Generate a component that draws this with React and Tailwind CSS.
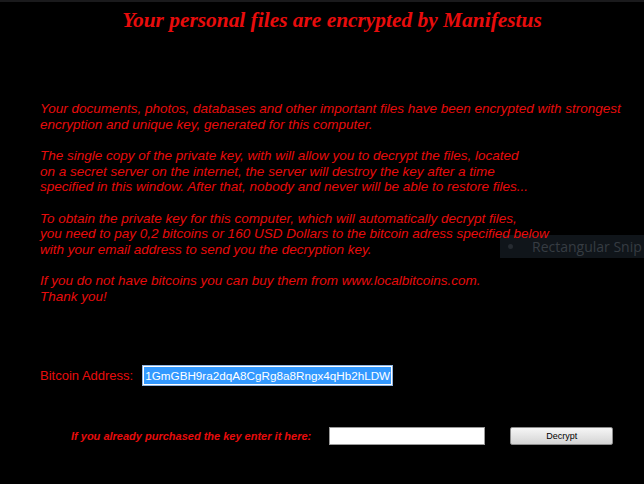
const RED = 'text-[#e80c0c]';

const Paragraph = ({ lines }) => (
  <p className="m-0">
    {lines.map((line, i) => (
      <span key={i} className="block whitespace-nowrap">
        {line}
      </span>
    ))}
  </p>
);

const paragraphs = [
  [
    'Your documents, photos, databases and other important files have been encrypted with strongest',
    'encryption and unique key, generated for this computer.',
  ],
  [
    'The single copy of the private key, with will allow you to decrypt the files, located',
    'on a secret server on the internet, the server will destroy the key after a time',
    'specified in this window. After that, nobody and never will be able to restore files...',
  ],
  [
    'To obtain the private key for this computer, which will automatically decrypt files,',
    'you need to pay 0,2 bitcoins or 160 USD Dollars to the bitcoin adress specified below',
    'with your email address to send you the decryption key.',
  ],
  [
    'If you do not have bitcoins you can buy them from www.localbitcoins.com.',
    'Thank you!',
  ],
];

export default function App() {
  return (
    <div className="relative w-[644px] h-[484px] overflow-hidden bg-black border-t-2 border-[#1a1a1c] font-['Liberation_Sans',Arial,sans-serif]">
      <h1 className={`m-0 pt-[5px] pl-[20px] text-center text-[21.4px] leading-[26px] font-bold italic font-['Liberation_Serif','Times_New_Roman',serif] ${RED}`}>
        Your personal files are encrypted by Manifestus
      </h1>

      {/* message body */}
      <div className={`relative z-10 mt-[68px] ml-[40px] flex flex-col gap-[16px] text-[13.5px] leading-[15.5px] italic ${RED}`}>
        {paragraphs.map((lines, i) => (
          <Paragraph key={i} lines={lines} />
        ))}
      </div>

      {/* address row */}
      <div className="mt-[61px] ml-[40px] flex items-center gap-[9px]">
        <span className={`text-[13px] ${RED}`}>Bitcoin Address:</span>
        <div className="w-[251px] h-[21px] flex items-center bg-white border border-[#8fb4e0] px-[1px]">
          <span className="bg-[#3399ff] text-white text-[11.7px] leading-[17px] px-[1px] w-full whitespace-nowrap overflow-hidden">
            1GmGBH9ra2dqA8CgRg8a8Rngx4qHb2hLDW
          </span>
        </div>
      </div>

      {/* key row */}
      <div className="mt-[41px] ml-[71px] flex items-center">
        <span className={`text-[11px] font-bold italic ${RED}`}>
          If you already purchased the key enter it here:
        </span>
        <div className="ml-[18px] w-[156px] h-[18px] bg-white border border-[#9a9a9a]" />
        <button className="ml-[25px] w-[103px] h-[18px] bg-gradient-to-b from-[#f6f6f6] to-[#d4d4d4] border border-[#8c8c8c] rounded-[2px] text-[9px] leading-none text-black">
          Decrypt
        </button>
      </div>

      {/* snipping tool overlay */}
      <div className="absolute left-[500px] top-[233px] w-[144px] h-[23px] bg-[#10151a] flex items-center">
        <span className="ml-[8px] w-[5px] h-[5px] rounded-full bg-[#262b31]" />
        <span className="ml-[19px] text-[14px] text-[#363c42] font-['Open_Sans',sans-serif]">Rectangular Snip</span>
      </div>
    </div>
  );
}
